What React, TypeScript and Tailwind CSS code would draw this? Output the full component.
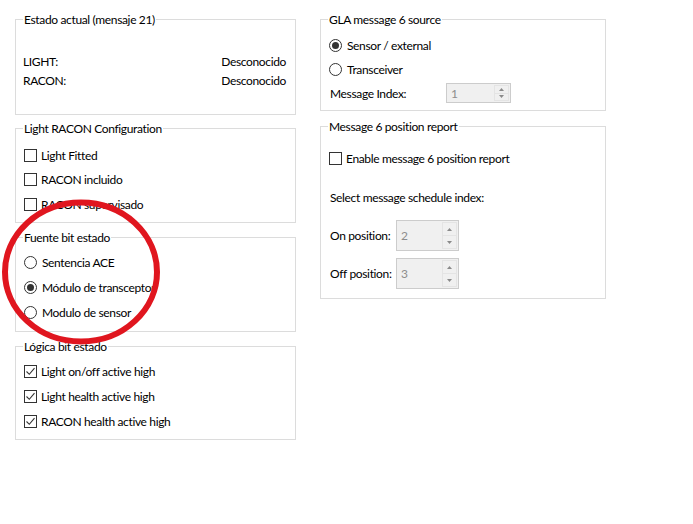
import React from 'react';

const font = "font-['Lato','Noto_Sans',sans-serif]";

const GroupBox: React.FC<{ title: string; className?: string; children: React.ReactNode }> = ({
  title,
  className = '',
  children,
}) => (
  <fieldset className={`border border-[#dcdcdc] px-[7px] ${className}`}>
    <legend className="px-[1px] leading-[15px]">{title}</legend>
    {children}
  </fieldset>
);

const CheckBox: React.FC<{ label: string; checked?: boolean; className?: string }> = ({
  label,
  checked = false,
  className = 'h-[24.5px]',
}) => (
  <div className={`flex items-center gap-[4px] whitespace-nowrap pl-[1px] ${className}`}>
    <span className="flex h-[13px] w-[13px] shrink-0 items-center justify-center border border-[#333333] bg-white">
      {checked ? (
        <svg width="11" height="11" viewBox="0 0 11 11">
          <path d="M1.5 5.5 L4.3 8.3 L9.5 2.2" fill="none" stroke="#333333" strokeWidth="1.1" />
        </svg>
      ) : null}
    </span>
    <span>{label}</span>
  </div>
);

const Radio: React.FC<{ label: string; checked?: boolean; className?: string }> = ({
  label,
  checked = false,
  className = 'h-[25px]',
}) => (
  <div className={`flex items-center gap-[5px] whitespace-nowrap pl-[1px] ${className}`}>
    <span className="flex h-[13px] w-[13px] shrink-0 items-center justify-center rounded-full border border-[#333333] bg-white">
      {checked ? <span className="h-[7px] w-[7px] rounded-full bg-[#333333]" /> : null}
    </span>
    <span>{label}</span>
  </div>
);

const Arrow: React.FC<{ up?: boolean }> = ({ up = false }) => (
  <svg width="5" height="3" viewBox="0 0 5 3">
    <polygon points={up ? '0,3 5,3 2.5,0' : '0,0 5,0 2.5,3'} fill="#8a8a8a" />
  </svg>
);

const Spinner: React.FC<{ value: string; className: string }> = ({ value, className }) => (
  <div className={`flex border border-[#cccccc] bg-[#f0f0f0] ${className}`}>
    <div className="flex flex-1 items-center pl-[4px] text-[#8d8d8d]">{value}</div>
    <div className="my-[1px] mr-[1px] flex w-[15px] flex-col border border-[#e4e4e4]">
      <div className="flex flex-1 items-center justify-center">
        <Arrow up />
      </div>
      <div className="flex flex-1 items-center justify-center border-t border-[#e4e4e4]">
        <Arrow />
      </div>
    </div>
  </div>
);

export default function App() {
  return (
    <div
      className={`relative h-[524px] w-[693px] overflow-hidden bg-white text-[12px] leading-[15px] tracking-[-0.35px] text-black ${font}`}
    >
      <div className="flex gap-[24px] pl-[15px] pt-[12px]">
        <div className="flex w-[281px] flex-col">
          <GroupBox title="Estado actual (mensaje 21)" className="h-[103px] pr-[9px]">
            <div className="mt-[25px] flex h-[19px] items-center justify-between">
              <span>LIGHT:</span>
              <span>Desconocido</span>
            </div>
            <div className="flex h-[19px] items-center justify-between">
              <span>RACON:</span>
              <span>Desconocido</span>
            </div>
          </GroupBox>

          <GroupBox title="Light RACON Configuration" className="mt-[6px] h-[102px]">
            <div className="mt-[7px]">
              <CheckBox label="Light Fitted" />
              <CheckBox label="RACON incluido" />
              <CheckBox label="RACON supervisado" />
            </div>
          </GroupBox>

          <GroupBox title="Fuente bit estado" className="mt-[7px] h-[102px]">
            <div className="mt-[5px]">
              <Radio label="Sentencia ACE" />
              <Radio label="Módulo de transceptor" checked />
              <Radio label="Modulo de sensor" />
            </div>
          </GroupBox>

          <GroupBox title="Lógica bit estado" className="mt-[7px] h-[101px]">
            <div className="mt-[5px]">
              <CheckBox label="Light on/off active high" checked className="h-[25px]" />
              <CheckBox label="Light health active high" checked className="h-[25px]" />
              <CheckBox label="RACON health active high" checked className="h-[25px]" />
            </div>
          </GroupBox>
        </div>

        <div className="flex w-[286px] flex-col">
          <GroupBox title="GLA message 6 source" className="h-[99px]">
            <div className="mt-[6px]">
              <Radio label="Sensor / external" checked className="h-[24px]" />
              <Radio label="Transceiver" className="h-[24px]" />
              <div className="flex h-[24px] items-center">
                <span className="w-[118px] whitespace-nowrap pl-[2px]">Message Index:</span>
                <Spinner value="1" className="h-[20px] w-[65px]" />
              </div>
            </div>
          </GroupBox>

          <GroupBox title="Message 6 position report" className="mt-[8px] h-[180px]">
            <CheckBox label="Enable message 6 position report" className="mt-[12px] h-[24px]" />
            <div className="mt-[15px] flex h-[24px] items-center whitespace-nowrap pl-[2px]">
              Select message schedule index:
            </div>
            <div className="mt-[11px] flex h-[31px] items-center">
              <span className="w-[68px] whitespace-nowrap pl-[2px]">On position:</span>
              <Spinner value="2" className="h-[31px] w-[63px]" />
            </div>
            <div className="mt-[7px] flex h-[31px] items-center">
              <span className="w-[68px] whitespace-nowrap pl-[2px]">Off position:</span>
              <Spinner value="3" className="h-[31px] w-[63px]" />
            </div>
          </GroupBox>
        </div>
      </div>

      <svg className="pointer-events-none absolute left-0 top-[195px]" width="170" height="160" viewBox="0 0 170 160">
        <ellipse cx="81" cy="77" rx="76" ry="69.5" fill="none" stroke="#e0161f" strokeWidth="6" />
      </svg>
    </div>
  );
}
